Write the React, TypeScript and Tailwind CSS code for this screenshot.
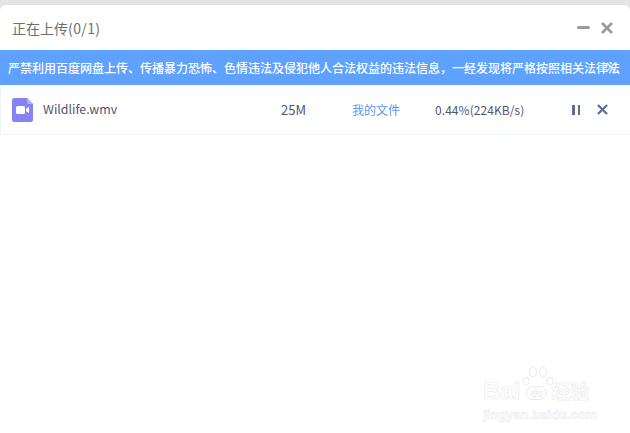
const cjk = '"Microsoft YaHei","Noto Sans CJK SC","Noto Sans",sans-serif';
const arial = '"Liberation Sans",sans-serif';

function VideoFile() {
  return (
    <svg width="21" height="24" viewBox="0 0 21 24">
      <path d="M2.5 0H15L21 6V21.5A2.5 2.5 0 0 1 18.5 24H2.5A2.5 2.5 0 0 1 0 21.5V2.5A2.5 2.5 0 0 1 2.5 0Z" fill="#8583f3" />
      <path d="M15 0L21 6H17A2 2 0 0 1 15 4Z" fill="#b3b1f8" />
      <rect x="4" y="8" width="9" height="8" rx="1.5" fill="#fff" />
      <path d="M14 11L17 8.8V15.2L14 13Z" fill="#fff" />
    </svg>
  );
}

function Cross({ size, color, width }: { size: number; color: string; width: number }) {
  return (
    <svg width={size} height={size} viewBox="0 0 12 12">
      <path d="M1 1L11 11M11 1L1 11" stroke={color} strokeWidth={width} />
    </svg>
  );
}

export default function App() {
  return (
    <div
      className="h-[433px] w-[630px] overflow-hidden bg-gradient-to-b from-[#e4e4e4] to-[#f4f4f4]"
      style={{ fontFamily: cjk }}
    >
      <div className="relative mt-[5px] h-[428px] rounded-tl-md rounded-tr-md bg-white">
        <header className="flex h-[45px] items-center justify-between pl-3 pr-[17px]">
          <h1 className="text-sm font-normal text-[#6e6e6e]">
            正在上传<span className="tracking-[0.4px]">(0/1)</span>
          </h1>
          <div className="flex items-center gap-[11px]">
            <span className="h-[3px] w-[13px] rounded-sm bg-[#9a9a9a]" />
            <Cross size={12} color="#9a9a9a" width={2.6} />
          </div>
        </header>

        <div className="relative flex h-[35px] items-center overflow-hidden bg-[#5fa1ff] pl-2 text-xs font-medium whitespace-nowrap text-white">
          严禁利用百度网盘上传、传播暴力恐怖、色情违法及侵犯他人合法权益的违法信息，一经发现将严格按照相关法律法
          <span className="absolute top-[12px] left-[606px]">
            <Cross size={10} color="#ffffff" width={1.4} />
          </span>
        </div>

        <div className="flex h-[50px] items-center border-b border-l border-[#eef4fd] pl-[11px] text-xs text-[#50566e]">
          <VideoFile />
          <span className="ml-[10px] w-[238px] text-[12.4px]">Wildlife.wmv</span>
          <span className="w-[71px] text-[13px]">25M</span>
          <span className="w-[83px] text-[#5b95ee]">我的文件</span>
          <span className="w-[137px] tracking-[0.07px]">0.44%(224KB/s)</span>
          <span className="flex h-[10px] w-[8px] justify-between">
            <span className="w-[2.5px] bg-[#5e6d96]" />
            <span className="w-[2.5px] bg-[#5e6d96]" />
          </span>
          <span className="ml-[17px]">
            <Cross size={11} color="#5e6d96" width={2.4} />
          </span>
        </div>

        <div className="absolute top-[377px] left-[483px] w-[114px] text-white [-webkit-text-stroke:0.6px_#ebebeb]">
          <div className="flex items-end font-bold">
            <span className="text-[24px] leading-[18px]" style={{ fontFamily: arial }}>Bai</span>
            <span className="relative ml-[6px] flex h-[14px] w-[21px] items-center justify-center rounded-full border border-[#ebebeb] text-[10px]" style={{ fontFamily: arial }}>
              du
              <svg className="absolute -top-[21px] -left-[5px]" width="32" height="22" viewBox="0 0 32 22" fill="none" stroke="#ebebeb" strokeWidth="1">
                <ellipse cx="4" cy="15" rx="3" ry="4" />
                <ellipse cx="11" cy="6" rx="3.5" ry="5" />
                <ellipse cx="21" cy="6" rx="3.5" ry="5" />
                <ellipse cx="28" cy="15" rx="3" ry="4" />
              </svg>
            </span>
            <span className="ml-[4px] text-[19px] leading-[18px]">经验</span>
          </div>
          <div className="mt-[8px] text-[13px] font-bold leading-none whitespace-nowrap" style={{ fontFamily: arial }}>
            jingyan.baidu.com
          </div>
        </div>
      </div>
    </div>
  );
}
